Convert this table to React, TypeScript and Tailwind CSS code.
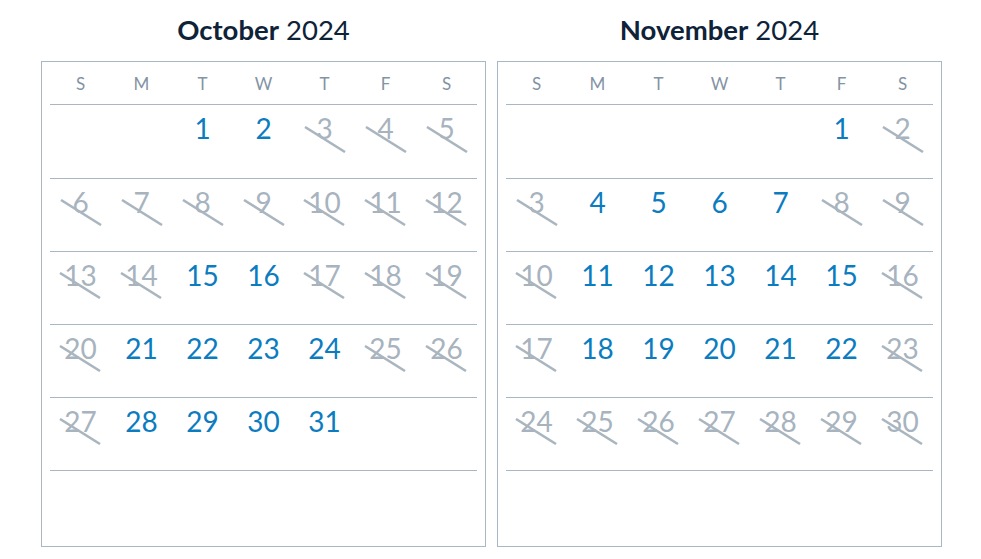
import React from 'react';

type Month = { name: string; year: string; offset: number; days: number; open: number[] };

const months: Month[] = [
  {
    name: 'October',
    year: '2024',
    offset: 2,
    days: 31,
    open: [1, 2, 15, 16, 21, 22, 23, 24, 28, 29, 30, 31],
  },
  {
    name: 'November',
    year: '2024',
    offset: 5,
    days: 30,
    open: [1, 4, 5, 6, 7, 11, 12, 13, 14, 15, 18, 19, 20, 21, 22],
  },
];

const weekdays = ['S', 'M', 'T', 'W', 'T', 'F', 'S'];

export default function App() {
  return (
    <div className="min-h-screen bg-white pl-[41px] font-['Lato',sans-serif]">
      <div className="flex gap-[11px]">
        {months.map((m) => (
          <MonthCard key={m.name} month={m} />
        ))}
      </div>
    </div>
  );
}

function MonthCard({ month }: { month: Month }) {
  const cells: (number | null)[] = [];
  for (let i = 0; i < month.offset; i++) cells.push(null);
  for (let d = 1; d <= month.days; d++) cells.push(d);
  while (cells.length % 7 !== 0) cells.push(null);
  const weeks: (number | null)[][] = [];
  for (let i = 0; i < cells.length; i += 7) weeks.push(cells.slice(i, i + 7));

  return (
    <div className="w-[445px]">
      <h2 className="h-[61px] pt-[12px] text-center text-[27.5px] leading-[36px] text-[#0e2238]">
        <span className="font-bold">{month.name}</span> {month.year}
      </h2>
      <div className="h-[486px] border border-[#a9b6c3] px-[8px]">
        <div className="grid h-[42px] grid-cols-7 items-center pt-[2px] text-center text-[17px] text-[#8393a4]">
          {weekdays.map((w, i) => (
            <span key={i}>{w}</span>
          ))}
        </div>
        {weeks.map((week, wi) => (
          <div key={wi} className={`grid grid-cols-7 border-t border-[#a9b6c3] ${wi === 0 ? 'h-[74px]' : 'h-[73px]'}`}>
            {week.map((d, di) => (
              <div key={di} className="flex justify-center pt-[6px]">
                {d !== null && <Day day={d} open={month.open.includes(d)} />}
              </div>
            ))}
          </div>
        ))}
        <div className="border-t border-[#a9b6c3]" />
      </div>
    </div>
  );
}

function Day({ day, open }: { day: number; open: boolean }) {
  if (open) {
    return <span className="block text-[28px] leading-[34px] text-[#0b7cc0]">{day}</span>;
  }
  return (
    <span className="relative block text-[28px] leading-[34px] text-[#a7b3be]">
      {day}
      <svg
        className="absolute left-1/2 top-1/2 -ml-[21px] -mt-[19px] h-[27px] w-[42px] max-w-none"
        viewBox="0 0 42 27"
      >
        <line x1="1" y1="1" x2="41" y2="26" stroke="#a9b5bf" strokeWidth="2.5" />
      </svg>
    </span>
  );
}
